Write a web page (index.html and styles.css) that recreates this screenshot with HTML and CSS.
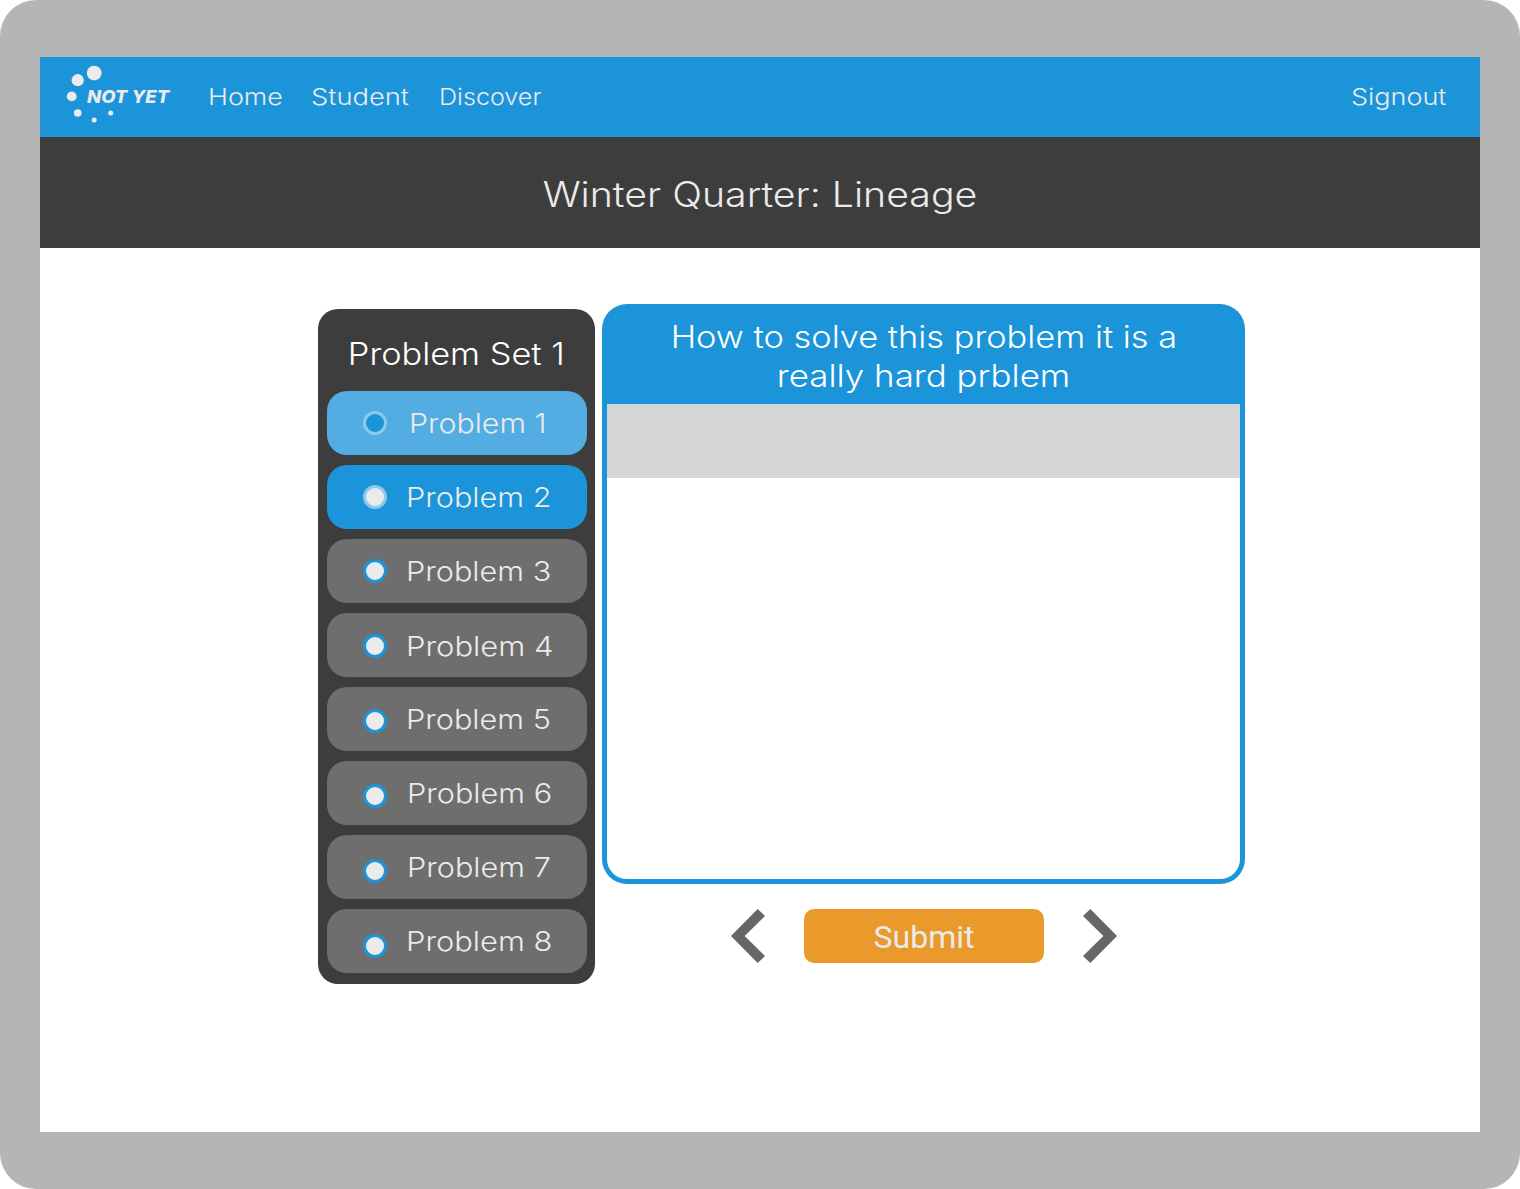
FILE: index.html
```
<!DOCTYPE html>
<html lang="en">
<head>
<meta charset="utf-8">
<title>Winter Quarter: Lineage</title>
<link rel="stylesheet" href="styles.css">
</head>
<body>
<div class="device">
  <div class="screen">
    <header class="navbar">
      <div class="brand">
        <svg class="brand-dots" width="50" height="62" viewBox="0 0 50 62" aria-hidden="true">
          <circle cx="29.2" cy="11.1" r="7.4"/>
          <circle cx="12.7" cy="18.2" r="6.1"/>
          <circle cx="6.7" cy="34.4" r="4.9"/>
          <circle cx="12.7" cy="51" r="3.8"/>
          <circle cx="29.2" cy="58" r="2.5"/>
          <circle cx="45.7" cy="51" r="2.5"/>
        </svg>
        <span class="brand-name">NOT YET</span>
      </div>
      <nav class="links">
        <a class="link link-home">Home</a>
        <a class="link link-student">Student</a>
        <a class="link link-discover">Discover</a>
      </nav>
      <a class="link link-signout">Signout</a>
    </header>
    <div class="titlebar"><h1 class="title">Winter Quarter: Lineage</h1></div>
    <main class="workspace">
      <aside class="sidebar">
        <h2 class="set-title"><span class="set-name">Problem Set 1</span></h2>
        <ul class="problems">
          <li class="problem done"><i class="dot"></i><span class="label">Problem 1</span></li>
          <li class="problem current"><i class="dot"></i><span class="label">Problem 2</span></li>
          <li class="problem"><i class="dot"></i><span class="label">Problem 3</span></li>
          <li class="problem"><i class="dot"></i><span class="label">Problem 4</span></li>
          <li class="problem"><i class="dot"></i><span class="label">Problem 5</span></li>
          <li class="problem"><i class="dot"></i><span class="label">Problem 6</span></li>
          <li class="problem"><i class="dot"></i><span class="label">Problem 7</span></li>
          <li class="problem"><i class="dot"></i><span class="label">Problem 8</span></li>
        </ul>
      </aside>
      <section class="content">
        <div class="panel">
          <div class="question">
            <span class="line line-first">How to solve this problem it is a</span>
            <span class="line line-second">really hard prblem</span>
          </div>
          <div class="toolbar"></div>
          <div class="answer"></div>
        </div>
        <div class="actions">
          <svg class="arrow" width="34" height="54" viewBox="0 0 34 54"><path d="M26.7 0L34 7L13.7 27L34 47L26.7 54L0 27Z"/></svg>
          <button class="submit">Submit</button>
          <svg class="arrow" width="34" height="54" viewBox="0 0 34 54"><path d="M7.3 0L0 7L20.3 27L0 47L7.3 54L34 27Z"/></svg>
        </div>
      </section>
    </main>
  </div>
</div>
</body>
</html>
```
FILE: styles.css
```
* { box-sizing: border-box; }

body {
  margin: 0;
  background: #fff;
  font-family: Inter, "Open Sans", sans-serif;
  font-weight: 300;
  color: #ebebeb;
}

.device {
  height: 1189px;
  padding: 57px 40px;
  border-radius: 36px;
  background: #b5b5b5;
}

.screen {
  display: flex;
  flex-direction: column;
  height: 1075px;
  background: #fff;
}

.navbar {
  display: flex;
  align-items: center;
  height: 80px;
  padding: 0 33px 0 25px;
  background: #1b94da;
}

.brand {
  display: flex;
  align-items: center;
  width: 143px;
}

.brand-dots {
  flex: none;
  margin-top: -8px;
  fill: #ebebeb;
}

.brand-name {
  margin: -2px 0 0 -28px;
  font-size: 17.3px;
  font-weight: 800;
  font-style: italic;
  white-space: nowrap;
  transform: scaleX(1.07);
  transform-origin: left;
}

.links {
  display: grid;
  grid-template-columns: 103px 128px 110px;
}

.link {
  font-size: 23.1px;
  line-height: 28px;
  transform-origin: left;
}

.link-home { transform: scaleX(1.165); }
.link-student { transform: scaleX(1.183); }
.link-discover { transform: scaleX(1.088); }
.link-signout {
  width: 96px;
  margin-left: auto;
  transform: scaleX(1.168);
}

.titlebar {
  display: flex;
  align-items: center;
  justify-content: center;
  height: 111px;
  padding-top: 2px;
  background: #3d3d3d;
}

.title {
  margin: 0;
  font-size: 34.7px;
  font-weight: 300;
  transform: scaleX(1.132);
}

.workspace {
  display: flex;
  align-items: flex-start;
  gap: 7px;
  padding: 56px 0 0 278px;
}

.sidebar {
  width: 277px;
  height: 675px;
  margin-top: 5px;
  padding: 0 8px 0 9px;
  border-radius: 20px;
  background: #3d3d3d;
}

.set-title {
  display: flex;
  align-items: center;
  justify-content: center;
  height: 82px;
  margin: 0;
  padding: 6px 2px 0 0;
  color: #fff;
  font-size: 30.8px;
  font-weight: 300;
}

.set-name { transform: scaleX(1.115); }

.problems {
  display: grid;
  gap: 10px;
  margin: 0;
  padding: 0;
  list-style: none;
}

.problem {
  display: flex;
  align-items: center;
  height: 64px;
  padding-left: 36px;
  border-radius: 20px;
  background: #6e6e6e;
}

.dot {
  width: 24px;
  height: 24px;
  border: 3px solid #1b94da;
  border-radius: 50%;
  background: #ebebeb;
}

.label {
  margin-left: 19px;
  font-size: 27px;
  transform: scaleX(1.135);
  transform-origin: left;
}

.done { background: #54ade2; }
.done .dot { border-color: #8dc9ed; background: #1b94da; }
.done .label { margin-left: 22px; transform: scaleX(1.125); }
.current { background: #1b94da; }
.current .dot { border-color: #8dc9ed; }

/* Bullets drift down slightly along the list */
.problem:nth-child(4) .dot { margin-top: 2px; }
.problem:nth-child(5) .dot { margin-top: 4px; }
.problem:nth-child(6) .dot { margin-top: 6px; }
.problem:nth-child(7) .dot { margin-top: 8px; }
.problem:nth-child(8) .dot { margin-top: 10px; }
.problem:nth-child(4) .label { margin-top: 2px; transform: scaleX(1.147); }
.problem:nth-child(8) .label { transform: scaleX(1.143); }
.problem:nth-child(6) .label,
.problem:nth-child(7) .label { margin-left: 20px; }

.content { width: 643px; }

.panel {
  height: 580px;
  padding: 0 5px 5px;
  border-radius: 25px;
  background: #1b94da;
}

.question {
  display: flex;
  flex-direction: column;
  align-items: center;
  height: 100px;
  padding: 13px 0 0 1px;
  color: #fff;
  font-size: 30.8px;
  line-height: 39px;
}

.line { white-space: nowrap; }
.line-first { transform: scaleX(1.116); }
.line-second { transform: scaleX(1.133); }

.toolbar {
  height: 74px;
  background: #d6d6d6;
}

.answer {
  height: 401px;
  border-radius: 0 0 20px 20px;
  background: #fff;
}

.actions {
  display: flex;
  align-items: center;
  justify-content: center;
  gap: 39px;
  margin-top: 25px;
}

.arrow { fill: #666; }

.submit {
  width: 240px;
  height: 54px;
  padding: 2px 0 0 1px;
  border: 0;
  border-radius: 10px;
  background: #e99a2a;
  color: #ebebeb;
  font: 400 32px Roboto, sans-serif;
}
```
